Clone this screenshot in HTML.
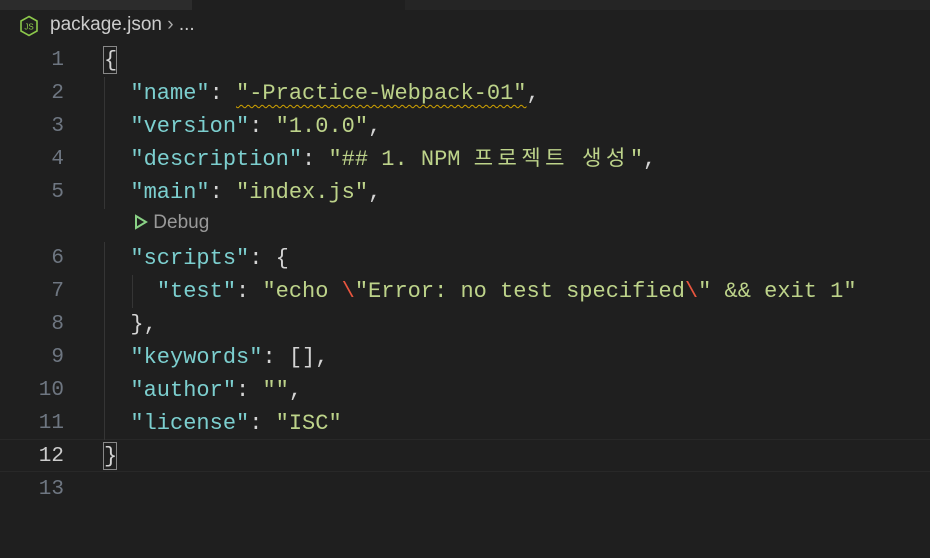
<!DOCTYPE html>
<html><head><meta charset="utf-8"><style>
body{margin:0;width:930px;height:558px;background:#1f1f1f;overflow:hidden;position:relative;font-family:"Liberation Mono","Noto Sans CJK KR",monospace}
.top{position:absolute;top:0;height:10px}
.bc{position:absolute;top:14px;left:50px;font-family:"Liberation Sans",sans-serif;font-size:19px;color:#cccccc}
.ln{position:absolute;left:0;width:64px;text-align:right;font-size:21px;color:#6e7681;height:33px;line-height:33px}
.code{position:absolute;left:104px;font-size:22px;height:33px;line-height:34px;white-space:pre;color:#d4d4d4}
.k{color:#7ccfcf}.s{color:#bdd38a}.e{color:#e8553e}
.h{letter-spacing:4.5px;font-size:21px}
.guide{position:absolute;left:104px;width:1px;background:#353535}
.sq{text-decoration:underline wavy #d1a300;text-underline-offset:5px;text-decoration-thickness:1px}
</style></head><body>
<div class="top" style="left:0;width:192px;background:#2c2c2c"></div>
<div class="top" style="left:192px;width:213px;background:#1f1f1f"></div>
<div class="top" style="left:405px;width:525px;background:#252525"></div>
<svg style="position:absolute;left:19px;top:15px" width="20" height="22" viewBox="0 0 20 22"><path d="M10 1.5 L18 6 V16 L10 20.5 L2 16 V6 Z" fill="none" stroke="#8cc84b" stroke-width="1.6"/><text x="10" y="14.5" font-size="8" fill="#8cc84b" text-anchor="middle" font-family="Liberation Sans">JS</text></svg>
<div class="bc">package.json <span style="color:#aaa">›</span> ...</div>
<div style="position:absolute;left:0;top:439px;width:930px;height:33px;border-top:1px solid #282828;border-bottom:1px solid #282828;box-sizing:border-box"></div>
<div class="guide" style="top:77px;height:132px"></div>
<div class="guide" style="top:242px;height:198px"></div>
<div class="guide" style="left:132px;top:275px;height:33px"></div>
<div style="position:absolute;left:103px;top:46px;width:14px;height:28px;border:1px solid #888;box-sizing:border-box"></div>
<div style="position:absolute;left:103px;top:442px;width:14px;height:28px;border:1px solid #888;box-sizing:border-box"></div>

<div class="ln" style="top:44px">1</div><div class="code" style="top:44px">{</div>
<div class="ln" style="top:77px">2</div><div class="code" style="top:77px">  <span class="k">"name"</span>: <span class="s sq">"-Practice-Webpack-01"</span>,</div>
<div class="ln" style="top:110px">3</div><div class="code" style="top:110px">  <span class="k">"version"</span>: <span class="s">"1.0.0"</span>,</div>
<div class="ln" style="top:143px">4</div><div class="code" style="top:143px">  <span class="k">"description"</span>: <span class="s">"## 1. NPM <span class="h">프로젝트</span> <span class="h">생성</span>"</span>,</div>
<div class="ln" style="top:176px">5</div><div class="code" style="top:176px">  <span class="k">"main"</span>: <span class="s">"index.js"</span>,</div>
<div style="position:absolute;left:134px;top:210px;font-family:'Liberation Sans',sans-serif;font-size:19px;color:#999;line-height:26px"><svg width="14" height="16" viewBox="0 0 14 16" style="vertical-align:-2px"><path d="M2 2 L12 8 L2 14 Z" fill="none" stroke="#89d185" stroke-width="2"/></svg> Debug</div>
<div class="ln" style="top:242px">6</div><div class="code" style="top:242px">  <span class="k">"scripts"</span>: {</div>
<div class="ln" style="top:275px">7</div><div class="code" style="top:275px">    <span class="k">"test"</span>: <span class="s">"echo <span class="e">\</span>"Error: no test specified<span class="e">\</span>" &amp;&amp; exit 1"</span></div>
<div class="ln" style="top:308px">8</div><div class="code" style="top:308px">  },</div>
<div class="ln" style="top:341px">9</div><div class="code" style="top:341px">  <span class="k">"keywords"</span>: [],</div>
<div class="ln" style="top:374px">10</div><div class="code" style="top:374px">  <span class="k">"author"</span>: <span class="s">""</span>,</div>
<div class="ln" style="top:407px">11</div><div class="code" style="top:407px">  <span class="k">"license"</span>: <span class="s">"ISC"</span></div>
<div class="ln" style="top:440px;color:#cccccc">12</div><div class="code" style="top:440px">}</div>
<div class="ln" style="top:473px">13</div>
</body></html>
